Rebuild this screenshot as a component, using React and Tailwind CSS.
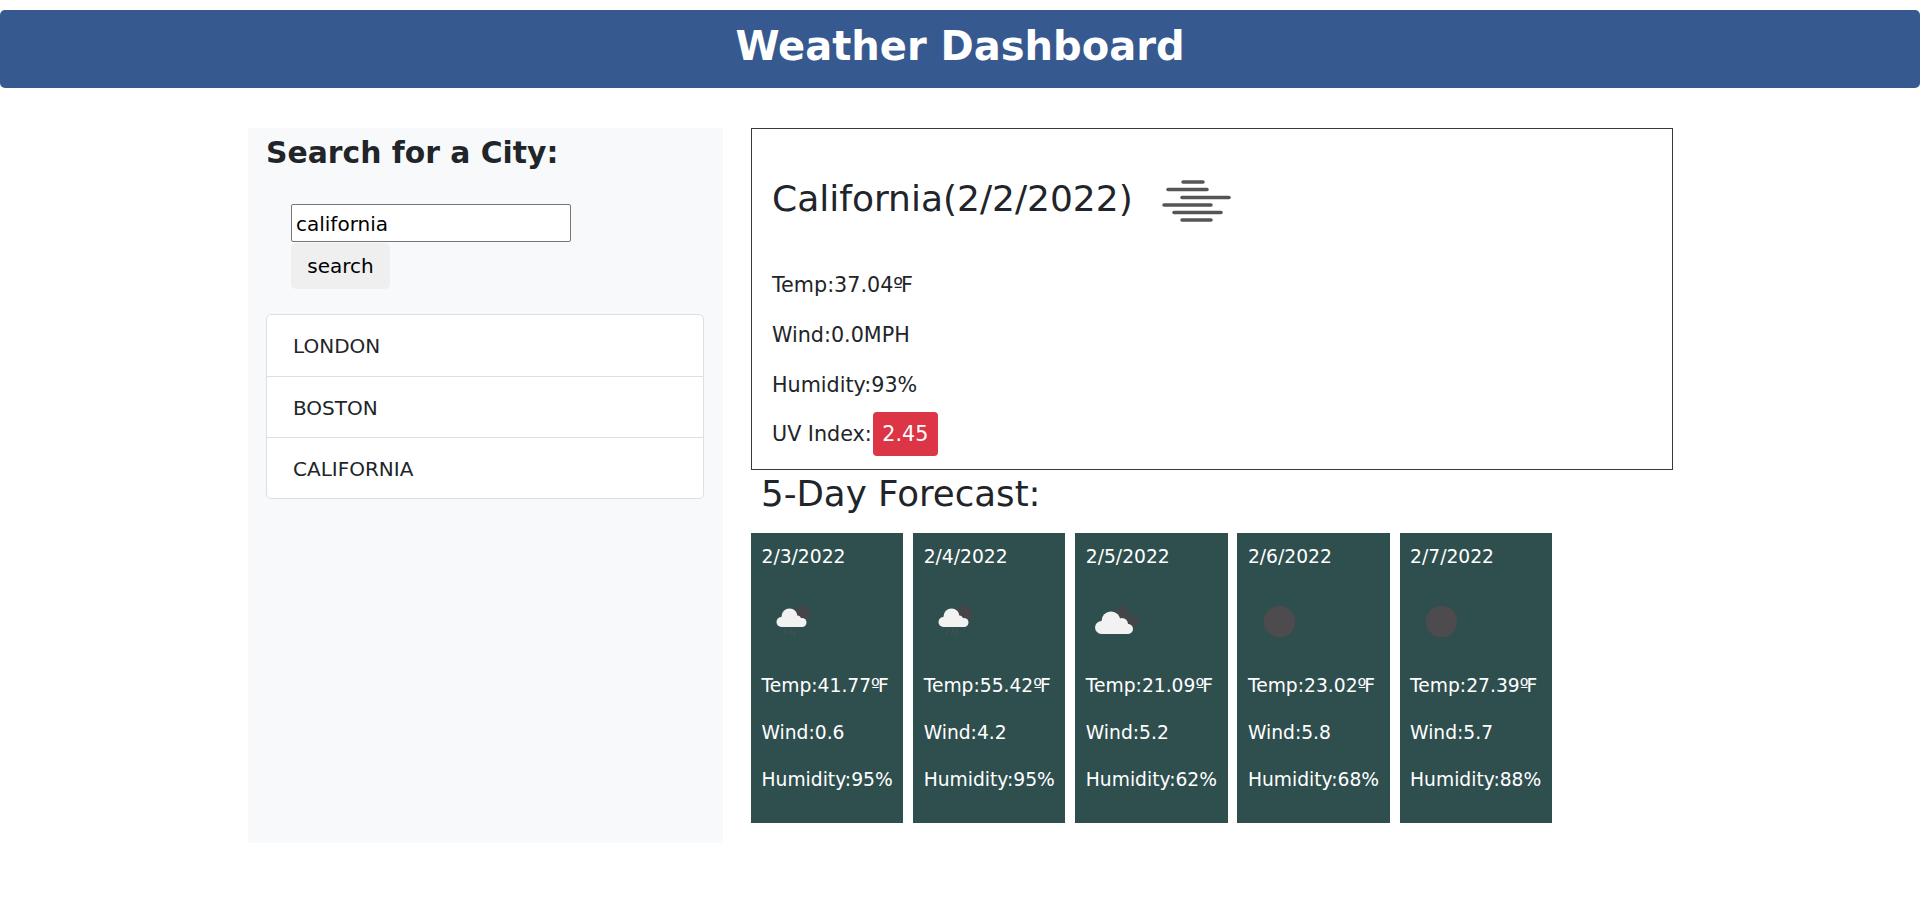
const forecast = [
  { date: '2/3/2022', temp: '41.77', wind: '0.6', humidity: '95%', icon: 'rain' },
  { date: '2/4/2022', temp: '55.42', wind: '4.2', humidity: '95%', icon: 'rain' },
  { date: '2/5/2022', temp: '21.09', wind: '5.2', humidity: '62%', icon: 'cloud' },
  { date: '2/6/2022', temp: '23.02', wind: '5.8', humidity: '68%', icon: 'dot' },
  { date: '2/7/2022', temp: '27.39', wind: '5.7', humidity: '88%', icon: 'dot' },
];

const cities = ['LONDON', 'BOSTON', 'CALIFORNIA'];

const Degree = () => (
  <>
    <span className="tracking-[-2px]">º</span>F
  </>
);

const MistIcon = () => (
  <svg width="100" height="60" viewBox="0 0 100 60" className="block">
    <g stroke="#555555" strokeWidth="3.500" strokeLinecap="round" fill="none">
      <path d="M33 13H53" />
      <path d="M18 20.500H57" />
      <path d="M32 28.500H79" />
      <path d="M14 36H61" />
      <path d="M24 43.500H71" />
      <path d="M32 51H61" />
    </g>
  </svg>
);

const WeatherIcon = ({ type }) => {
  if (type === 'dot') {
    return (
      <svg width="100" height="60" viewBox="0 0 100 60" className="block">
        <circle cx="31.500" cy="31.700" r="15.700" fill="#4d4b4d" />
      </svg>
    );
  }
  if (type === 'cloud') {
    return (
      <svg width="100" height="60" viewBox="0 0 100 60" className="block">
        <circle cx="35.500" cy="23" r="7" fill="#444548" />
        <circle cx="47.500" cy="31.500" r="6" fill="#444548" />
        <path d="M33 30l10-4 4 8-6 4z" fill="#444548" />
        <g fill="#f2f2f2">
          <circle cx="25" cy="31" r="9.500" />
          <circle cx="15.500" cy="37.500" r="6.500" />
          <circle cx="36" cy="34" r="6" />
          <circle cx="42" cy="39" r="5" />
          <rect x="15" y="34" width="28" height="10" />
        </g>
      </svg>
    );
  }
  return (
    <svg width="100" height="60" viewBox="0 0 100 60" className="block">
      <circle cx="39.500" cy="24" r="8.500" fill="#444548" />
      <g fill="#f2f2f2">
        <circle cx="27.500" cy="26.500" r="8" />
        <circle cx="19.500" cy="32" r="5" />
        <circle cx="35" cy="29.500" r="4" />
        <circle cx="40" cy="32.500" r="4.500" />
        <rect x="19" y="29" width="21" height="8" />
      </g>
      <g stroke="#4a4f50" strokeWidth="1.200" strokeLinecap="round">
        <path d="M24 39l-1 5" />
        <path d="M29 39l-1 5" />
        <path d="M33 40l-1 5" />
      </g>
    </svg>
  );
};

export default function App() {
  return (
    <div className="min-h-[902px] bg-white text-[#212529] font-['DejaVu_Sans',Verdana,sans-serif] pt-[10px]">
      <header className="h-[78px] rounded-[5px] bg-[#36598f] flex items-center justify-center pb-[7px]">
        <h1 className="text-[40px] font-bold text-white leading-none">Weather Dashboard</h1>
      </header>

      <div className="flex ml-[248px] mt-[40px]">
        <aside className="w-[475px] h-[715px] bg-[#f8f9fa] pl-[18px]">
          <h2 className="text-[29.800px] font-bold leading-[49px]">Search for a City:</h2>
          <div className="ml-[25px] mt-[27px] flex flex-col items-start">
            <input
              defaultValue="california"
              className="w-[280px] h-[38px] bg-white border border-[#767676] rounded-[2px] px-[4px] pt-[1px] text-[20px] text-black outline-none"
            />
            <button className="mt-[1px] w-[99px] h-[46px] rounded-[5px] bg-[#efefef] text-[20px] text-black">search</button>
          </div>
          <ul className="mt-[25px] w-[438px] bg-white border border-[#dfdfdf] rounded-[5px]">
            {cities.map((city, i) => (
              <li key={city} className={`h-[61px] flex items-center pl-[26px] text-[20px] ${i > 0 ? 'border-t border-[#dfdfdf] pt-[1px]' : ''}`}>
                {city}
              </li>
            ))}
          </ul>
        </aside>

        <main className="ml-[28px] w-[922px]">
          <section className="h-[342px] border border-[#343a40] pl-[20px]">
            <div className="flex items-center h-[130px] pt-[10px]">
              <h2 className="text-[36px] leading-none">California(2/2/2022)</h2>
              <div className="ml-[17px]"><MistIcon /></div>
            </div>
            <p className="text-[20.700px] leading-[27px] mt-[13px]">Temp:37.04<Degree /></p>
            <p className="text-[20.700px] leading-[27px] mt-[23px]">Wind:0.0MPH</p>
            <p className="text-[20.700px] leading-[27px] mt-[23px]">Humidity:93%</p>
            <p className="text-[20.700px] leading-[27px] mt-[13px] flex items-center">
              UV Index:
              <span className="ml-[1px] h-[44px] w-[65px] flex items-center justify-center rounded-[4px] bg-[#dc3545] text-white">2.45</span>
            </p>
          </section>

          <h3 className="text-[35.600px] leading-[48px] pl-[10px]">5-Day Forecast:</h3>

          <div className="flex gap-[9.850px] mt-[15px]">
            {forecast.map((day) => (
              <div key={day.date} className="w-[152.300px] h-[290px] bg-[#2f4f4f] text-white pl-[10.500px] text-[18.700px]">
                <p className="mt-[11px] leading-[25px]">{day.date}</p>
                <div className="mt-[21px]"><WeatherIcon type={day.icon} /></div>
                <p className="mt-[23px] leading-[25px]">Temp:{day.temp}<Degree /></p>
                <p className="mt-[22px] leading-[25px]">Wind:{day.wind}</p>
                <p className="mt-[22px] leading-[25px]">Humidity:{day.humidity}</p>
              </div>
            ))}
          </div>
        </main>
      </div>
    </div>
  );
}
